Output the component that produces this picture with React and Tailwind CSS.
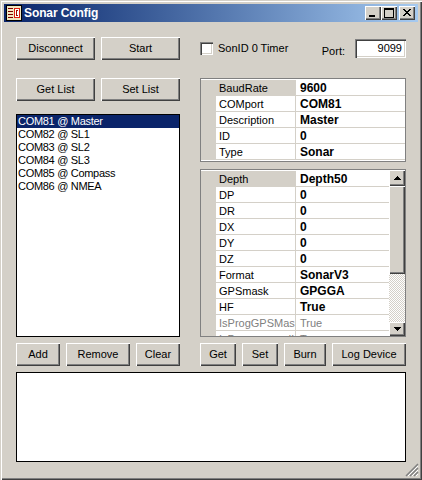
const bevel = 'bg-[#d4d0c8] shadow-[inset_1px_1px_0_#ffffff,inset_-1px_-1px_0_#404040,inset_-2px_-2px_0_#808080]'
const sunken = 'bg-white shadow-[inset_1px_1px_0_#808080,inset_2px_2px_0_#404040,inset_-1px_-1px_0_#ffffff,inset_-2px_-2px_0_#d4d0c8]'

function Btn({ children, className = '' }) {
  return (
    <button className={`${bevel} h-[23px] shrink-0 flex items-center justify-center text-[11px] text-black ${className}`}>
      {children}
    </button>
  )
}

function CaptionBtn({ children, className = '' }) {
  return (
    <div className={`${bevel} w-[16px] h-[14px] flex items-center justify-center ${className}`}>
      <svg width="16" height="14" viewBox="0 0 16 14" shapeRendering="crispEdges">{children}</svg>
    </div>
  )
}

function Row({ name, value, active, disabled }) {
  return (
    <div className="flex h-[16px] shrink-0 border-b border-[#d4d0c8]">
      <div className="w-[15px] shrink-0 bg-[#d4d0c8]" />
      <div className={`w-[80px] shrink-0 pl-[3px] leading-[16px] overflow-hidden whitespace-nowrap border-r border-[#d4d0c8] ${active ? 'bg-[#d4d0c8]' : 'bg-white'} ${disabled ? 'text-[#808080]' : 'text-black'}`}>
        {name}
      </div>
      <div className={`flex-1 pl-[4px] leading-[16px] whitespace-nowrap bg-white ${disabled ? 'text-[#808080]' : 'text-black font-bold text-[12px]'}`}>
        {value}
      </div>
    </div>
  )
}

const deviceProps = [
  ['BaudRate', '9600', true],
  ['COMport', 'COM81'],
  ['Description', 'Master'],
  ['ID', '0'],
  ['Type', 'Sonar'],
]

const sonarProps = [
  ['Depth', 'Depth50', true],
  ['DP', '0'],
  ['DR', '0'],
  ['DX', '0'],
  ['DY', '0'],
  ['DZ', '0'],
  ['Format', 'SonarV3'],
  ['GPSmask', 'GPGGA'],
  ['HF', 'True'],
  ['IsProgGPSMas', 'True', false, true],
  ['IsProgrammedH', 'True', false, true],
]

const ports = ['COM81 @ Master', 'COM82 @ SL1', 'COM83 @ SL2', 'COM84 @ SL3', 'COM85 @ Compass', 'COM86 @ NMEA']

function ScrollBar() {
  return (
    <div className="w-[16px] shrink-0 flex flex-col bg-[#d4d0c8]">
      <div className={`${bevel} h-[16px] shrink-0 flex items-center justify-center`}>
        <svg width="7" height="4" viewBox="0 0 7 4" shapeRendering="crispEdges"><path d="M3 0h1v1h1v1h1v1h1v1H0V3h1V2h1V1h1z" fill="#000" /></svg>
      </div>
      <div className={`${bevel} h-[88px] shrink-0`} />
      <div className="flex-1 bg-[repeating-conic-gradient(#d4d0c8_0_25%,#ffffff_0_50%)] bg-[length:2px_2px]" />
      <div className={`${bevel} h-[14px] shrink-0 flex items-center justify-center`}>
        <svg width="7" height="4" viewBox="0 0 7 4" shapeRendering="crispEdges"><path d="M0 0h7v1H6v1H5v1H4v1H3V3H2V2H1V1H0z" fill="#000" /></svg>
      </div>
    </div>
  )
}

export default function App() {
  return (
    <div className="w-[422px] h-[480px] bg-[#d4d0c8] p-[4px] relative overflow-hidden text-[11px] text-black font-['Liberation_Sans',Arial,sans-serif] shadow-[inset_1px_1px_0_#d4d0c8,inset_2px_2px_0_#ffffff,inset_-1px_-1px_0_#404040,inset_-2px_-2px_0_#808080]">
      {/* title bar */}
      <div className="h-[18px] flex items-center pl-[2px] pr-[3px] bg-gradient-to-r from-[#0a246a] to-[#a6caf0]">
        <svg width="16" height="16" viewBox="0 0 16 16" className="shrink-0" shapeRendering="crispEdges">
          <rect width="16" height="16" fill="#000" />
          <rect x="1" y="1" width="14" height="14" fill="#f0e6c0" />
          <path d="M2 3h5v1H2zM2 6h5v1H2zM2 9h5v1H2zM2 12h5v1H2z" fill="#800000" />
          <rect x="8" y="3" width="6" height="10" fill="#e02010" />
          <rect x="9" y="4" width="4" height="8" fill="#ffffff" />
          <path d="M10 5h2v6h-2zM10.5 6v4h1V6z" fill="#a01000" fillRule="evenodd" />
        </svg>
        <span className="ml-[2px] font-bold text-white text-[12px] tracking-[-0.1px] leading-[18px]">Sonar Config</span>
        <div className="ml-auto flex items-center">
          <CaptionBtn><path d="M4 9h6v2H4z" fill="#000" /></CaptionBtn>
          <CaptionBtn><path d="M3 2h10v10H3zM4 4v7h8V4z" fill="#000" fillRule="evenodd" /></CaptionBtn>
          <CaptionBtn className="ml-[2px]"><path d="M4 3h2v1h1v1h2V4h1V3h2v1h-1v1h-1v1H9v1h1v1h1v1h1v1h-2V9H9V8H7v1H6v1H4V9h1V8h1V7h1V6H6V5H5V4H4z" fill="#000" /></CaptionBtn>
        </div>
      </div>

      <div className="px-[12px] pt-[15px]">
        {/* top row */}
        <div className="flex items-center h-[23px]">
          <Btn className="w-[79px]">Disconnect</Btn>
          <Btn className="w-[79px] ml-[6px]">Start</Btn>
          <div className={`${sunken} ml-[20px] w-[13px] h-[13px] shrink-0`} />
          <span className="ml-[5px]">SonID 0 Timer</span>
          <span className="ml-auto mt-[5px]">Port:</span>
          <div className={`${sunken} ml-[10px] w-[51px] h-[19px] text-right pr-[4px] pt-[2px] leading-[15px]`}>9099</div>
        </div>

        {/* main columns */}
        <div className="flex gap-[20px] mt-[18px]">
          <div className="w-[164px] shrink-0 flex flex-col">
            <div className="flex gap-[6px]">
              <Btn className="w-[79px]">Get List</Btn>
              <Btn className="w-[79px]">Set List</Btn>
            </div>
            <div className="mt-[13px] h-[223px] border border-black bg-white">
              {ports.map((p, i) => (
                <div key={p} className={`h-[13px] leading-[13px] pl-[1px] tracking-[-0.3px] ${i === 0 ? 'bg-[#0a246a] text-white' : 'text-black'}`}>{p}</div>
              ))}
            </div>
            <div className="flex gap-[6px] mt-[6px]">
              <Btn className="w-[44px]">Add</Btn>
              <Btn className="w-[64px]">Remove</Btn>
              <Btn className="w-[44px]">Clear</Btn>
            </div>
          </div>

          <div className="w-[206px] shrink-0 flex flex-col">
            <div className="h-[84px] bg-white flex flex-col pt-[1px] border border-[#808080]">
              {deviceProps.map(([n, v, a]) => <Row key={n} name={n} value={v} active={a} />)}
            </div>
            <div className="h-[168px] mt-[7px] flex bg-white border border-[#808080] overflow-hidden">
              <div className="flex-1 min-w-0 flex flex-col pt-[1px] overflow-hidden">
                {sonarProps.map(([n, v, a, d]) => <Row key={n} name={n} value={v} active={a} disabled={d} />)}
              </div>
              <ScrollBar />
            </div>
            <div className="flex gap-[6px] mt-[6px]">
              <Btn className="w-[36px]">Get</Btn>
              <Btn className="w-[36px]">Set</Btn>
              <Btn className="w-[42px]">Burn</Btn>
              <Btn className="w-[74px]">Log Device</Btn>
            </div>
          </div>
        </div>

        {/* log box */}
        <div className="mt-[6px] w-[390px] h-[90px] bg-white border border-black" />
      </div>

      {/* size grip */}
      <svg width="14" height="14" viewBox="0 0 14 14" className="absolute right-[3px] bottom-[3px]">
        <path d="M13 1L1 13M13 5L5 13M13 9L9 13" stroke="#808080" strokeWidth="1.5" fill="none" />
        <path d="M13 3L3 13M13 7L7 13M13 11L11 13" stroke="#ffffff" strokeWidth="1" fill="none" />
      </svg>
    </div>
  )
}
